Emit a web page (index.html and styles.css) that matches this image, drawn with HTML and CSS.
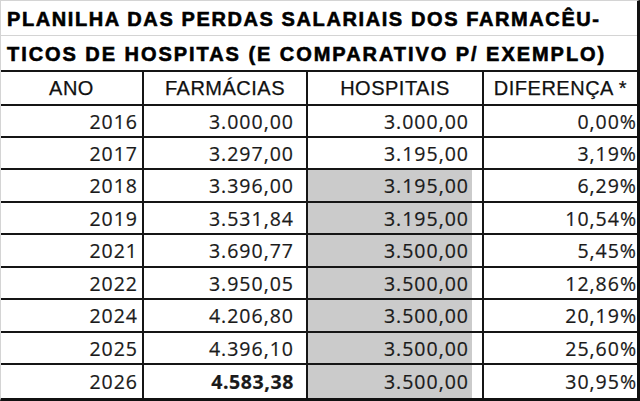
FILE: index.html
```html
<!DOCTYPE html>
<html lang="pt">
<head>
<meta charset="utf-8">
<title>Planilha</title>
<link rel="stylesheet" href="styles.css">
</head>
<body>
<div class="sheet">
  <div class="title t1">PLANILHA DAS PERDAS SALARIAIS DOS FARMACÊU-</div>
  <div class="title t2">TICOS DE HOSPITAS (E COMPARATIVO P/ EXEMPLO)</div>

  <div class="hd c0">ANO</div>
  <div class="hd c1">FARMÁCIAS</div>
  <div class="hd c2">HOSPITAIS</div>
  <div class="hd c3">DIFERENÇA *</div>

  <div class="cell c0 r-a">2016</div>
  <div class="cell c1 r-a">3.000,00</div>
  <div class="cell c2 r-a"><span class="box">3.000,00</span></div>
  <div class="cell c3 r-a">0,00%</div>

  <div class="cell c0 r-a">2017</div>
  <div class="cell c1 r-a">3.297,00</div>
  <div class="cell c2 r-a"><span class="box">3.195,00</span></div>
  <div class="cell c3 r-a">3,19%</div>

  <div class="cell c0 r-b">2018</div>
  <div class="cell c1 r-b">3.396,00</div>
  <div class="cell c2 r-b"><span class="box gray">3.195,00</span></div>
  <div class="cell c3 r-b">6,29%</div>

  <div class="cell c0 r-a">2019</div>
  <div class="cell c1 r-a">3.531,84</div>
  <div class="cell c2 r-a"><span class="box gray">3.195,00</span></div>
  <div class="cell c3 r-a">10,54%</div>

  <div class="cell c0 r-b">2021</div>
  <div class="cell c1 r-b">3.690,77</div>
  <div class="cell c2 r-b"><span class="box gray">3.500,00</span></div>
  <div class="cell c3 r-b">5,45%</div>

  <div class="cell c0 r-a">2022</div>
  <div class="cell c1 r-a">3.950,05</div>
  <div class="cell c2 r-a"><span class="box gray">3.500,00</span></div>
  <div class="cell c3 r-a">12,86%</div>

  <div class="cell c0 r-b">2024</div>
  <div class="cell c1 r-b">4.206,80</div>
  <div class="cell c2 r-b"><span class="box gray">3.500,00</span></div>
  <div class="cell c3 r-b">20,19%</div>

  <div class="cell c0 r-a">2025</div>
  <div class="cell c1 r-a">4.396,10</div>
  <div class="cell c2 r-a"><span class="box gray">3.500,00</span></div>
  <div class="cell c3 r-a">25,60%</div>

  <div class="cell c0 last">2026</div>
  <div class="cell c1 last"><b class="strong">4.583,38</b></div>
  <div class="cell c2 last"><span class="box gray">3.500,00</span></div>
  <div class="cell c3 last">30,95%</div>
</div>
</body>
</html>
```

FILE: styles.css
```css
* { box-sizing: border-box; }
html, body { margin: 0; padding: 0; background: #ffffff; }

.sheet {
  width: 640px;
  height: 401px;
  display: grid;
  grid-template-columns: 143px 164px 176px 154px;
  grid-template-rows: 35px 36px 34px 32px 32px 33px 32px 33px 32px 33px 32px 33px;
  border-top: 1px solid #d4d4d4;
  border-left: 1px solid #d4d4d4;
  border-right: 3px solid #111;
  border-bottom: 3px solid #111;
  background: #fff;
  overflow: hidden;
}

.title {
  grid-column: 1 / -1;
  font-family: "Liberation Sans", Arial, sans-serif;
  font-weight: bold;
  font-size: 20px;
  letter-spacing: 1.6px;
  color: #000;
  -webkit-text-stroke: 0.6px #000;
  display: flex;
  align-items: center;
  padding-left: 6px;
  padding-top: 2px;
  white-space: nowrap;
}
.t1 { border-bottom: 1px solid #d4d4d4; }
.t2 { border-bottom: 2px solid #151515; letter-spacing: 1.95px; }

.hd {
  font-family: "Liberation Sans", Arial, sans-serif;
  font-size: 20px;
  letter-spacing: 0.5px;
  color: #111;
  -webkit-text-stroke: 0.25px #111;
  display: flex;
  align-items: center;
  justify-content: center;
  border-bottom: 2px solid #151515;
  border-right: 2px solid #151515;
  white-space: nowrap;
}

.cell {
  font-family: "Open Sans", "Noto Sans", sans-serif;
  font-size: 19.5px;
  letter-spacing: 1px;
  color: #1a1a1a;
  -webkit-text-stroke: 0.2px #1a1a1a;
  display: flex;
  align-items: center;
  justify-content: flex-end;
  border-bottom: 2px solid #151515;
  border-right: 2px solid #151515;
  white-space: nowrap;
}
.c3 { border-right: none; padding-right: 1px; }
.hd.c3 { border-right: none; }
.c0.cell { padding-right: 4px; }
.c1.cell { padding-right: 12px; }
.c2.cell { padding-right: 10px; align-items: stretch; }
.cell.last { border-bottom: none; }

.box {
  display: flex;
  align-items: center;
  justify-content: flex-end;
  width: 164px;
  padding-right: 3px;
}
.box.gray { background: #cbcbcb; }

.strong { font-weight: bold; letter-spacing: 0.6px; }
```
